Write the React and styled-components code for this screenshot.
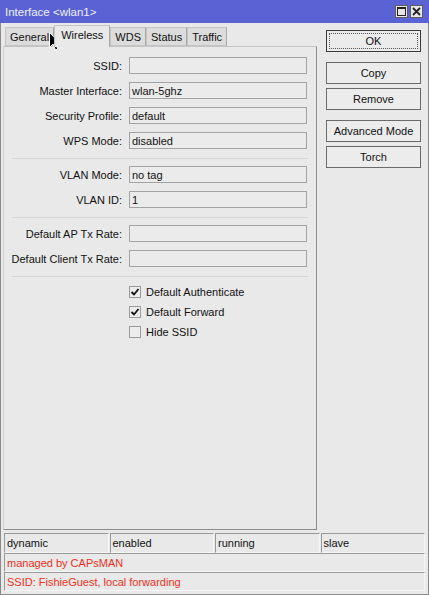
import React from "react";
import styled, { createGlobalStyle } from "styled-components";

const GlobalStyle = createGlobalStyle`
  html, body { margin: 0; padding: 0; background: #e9e9e9; }
  body {
    font-family: "Liberation Sans", Arial, sans-serif;
    font-size: 11px;
    color: #111;
  }
  * { box-sizing: border-box; }
`;

const Window = styled.div`
  position: relative;
  width: 429px;
  height: 595px;
  display: flex;
  flex-direction: column;
  background: #e9e9e9;
  border-left: 1px solid #8a8a8a;
  border-right: 1px solid #8a8a8a;
  border-bottom: 1px solid #8a8a8a;
`;

const TitleBar = styled.div`
  height: 23px;
  flex: none;
  margin: 0 -1px;
  background: #5a62d4;
  display: flex;
  align-items: center;
  justify-content: space-between;
  padding: 0 6px 0 5px;
  color: #eef0ff;
  font-size: 11.5px;
`;

const TitleButtons = styled.div`
  display: flex;
  gap: 2px;
`;

const TitleButton = styled.div`
  width: 13px;
  height: 13px;
  background: #e6e6e6;
  border: 1px solid #5d5d5d;
  display: flex;
  align-items: center;
  justify-content: center;
`;

const Main = styled.div`
  flex: 1;
  display: flex;
  min-height: 0;
`;

const LeftColumn = styled.div`
  width: 314px;
  margin-left: 2px;
  display: flex;
  flex-direction: column;
`;

const TabRow = styled.div`
  height: 23px;
  padding: 2px 0 0 2px;
  display: flex;
  align-items: flex-end;
`;

const Tab = styled.div`
  height: ${(p) => (p.$active ? "22px" : "19px")};
  padding: 0 ${(p) => (p.$active ? "6px" : "4px")};
  margin-bottom: ${(p) => (p.$active ? "-1px" : "0")};
  background: ${(p) => (p.$active ? "#e9e9e9" : "#dcdcdc")};
  border: 1px solid #c4c4c4;
  border-bottom: ${(p) => (p.$active ? "none" : "1px solid #c4c4c4")};
  border-right-color: #a8a8a8;
  display: flex;
  align-items: ${(p) => (p.$active ? "flex-start" : "center")};
  padding-top: ${(p) => (p.$active ? "3px" : "0")};
  font-size: 11px;
  color: #111;
  position: relative;
  z-index: ${(p) => (p.$active ? 1 : 0)};
`;

const Panel = styled.div`
  flex: 1;
  border-top: 1px solid #c4c4c4;
  border-left: 1px solid #d2d2d2;
  border-right: 1px solid #8c8c8c;
  border-bottom: 1px solid #8c8c8c;
  display: flex;
  flex-direction: column;
  padding: 0 8px;
`;

const Section = styled.div`
  display: flex;
  flex-direction: column;
  gap: ${(p) => p.$gap || 8}px;
  padding: ${(p) => p.$top || 8}px 0 9px;
  border-bottom: ${(p) => (p.$last ? "none" : "1px solid #d4d4d4")};
`;

const FieldRow = styled.div`
  display: flex;
  align-items: center;
  height: 17px;
`;

const Label = styled.div`
  width: 113px;
  margin-left: -3px;
  text-align: right;
  white-space: nowrap;
`;

const Input = styled.div`
  margin-left: 7px;
  width: 178px;
  height: 17px;
  border: 1px solid #a3a3a3;
  background: #ebebeb;
  display: flex;
  align-items: center;
  padding-left: 2px;
  font-size: 11px;
`;

const CheckRow = styled.div`
  display: flex;
  align-items: center;
  height: 14px;
  padding-left: 117px;
  gap: 5px;
`;

const CheckBox = styled.div`
  width: 12px;
  height: 12px;
  border: 1px solid #9a9a9a;
  background: #ececec;
  display: flex;
  align-items: center;
  justify-content: center;
`;

const RightColumn = styled.div`
  flex: 1;
  display: flex;
  flex-direction: column;
  padding: 7px 7px 0 9px;
`;

const Button = styled.div`
  height: 22px;
  border: 1px solid ${(p) => (p.$default ? "#3a3a3a" : "#6a6a6a")};
  background: #ececec;
  display: flex;
  align-items: center;
  justify-content: center;
  margin-top: ${(p) => p.$space || 0}px;
  position: relative;
  font-size: 11px;
  &::after {
    content: "";
    display: ${(p) => (p.$default ? "block" : "none")};
    position: absolute;
    inset: 2px;
    border: 1px dotted #555;
  }
`;

const StatusArea = styled.div`
  flex: none;
  padding: 3px;
  display: flex;
  flex-direction: column;
`;

const StatusCells = styled.div`
  display: grid;
  grid-template-columns: repeat(4, 1fr);
  gap: 1px;
`;

const StatusCell = styled.div`
  height: ${(p) => (p.$tall ? 20 : 19)}px;
  border-top: 1px solid #9a9a9a;
  border-left: 1px solid #9a9a9a;
  border-right: 1px solid #f6f6f6;
  border-bottom: 1px solid #f6f6f6;
  display: flex;
  align-items: center;
  padding-left: 2px;
  color: ${(p) => (p.$warn ? "#f0301a" : "#111")};
`;

const Cursor = styled.svg`
  position: absolute;
  left: 48px;
  top: 32px;
  pointer-events: none;
`;

const fields = [
  [
    ["SSID:", ""],
    ["Master Interface:", "wlan-5ghz"],
    ["Security Profile:", "default"],
    ["WPS Mode:", "disabled"],
  ],
  [
    ["VLAN Mode:", "no tag"],
    ["VLAN ID:", "1"],
  ],
  [
    ["Default AP Tx Rate:", ""],
    ["Default Client Tx Rate:", ""],
  ],
];

const checks = [
  ["Default Authenticate", true],
  ["Default Forward", true],
  ["Hide SSID", false],
];

const tabs = ["General", "Wireless", "WDS", "Status", "Traffic"];

const Tick = () => (
  <svg width="10" height="10" viewBox="0 0 10 10">
    <path d="M1.5 5 L4 7.5 L8.5 2" fill="none" stroke="#111" strokeWidth="1.8" />
  </svg>
);

export default function App() {
  return (
    <>
      <GlobalStyle />
      <Window>
        <TitleBar>
          <span>Interface &lt;wlan1&gt;</span>
          <TitleButtons>
            <TitleButton>
              <svg width="9" height="9" viewBox="0 0 9 9">
                <rect x="0.5" y="0.5" width="8" height="8" fill="none" stroke="#222" />
                <rect x="0.5" y="0.5" width="8" height="1.5" fill="#222" />
              </svg>
            </TitleButton>
            <TitleButton>
              <svg width="9" height="9" viewBox="0 0 9 9">
                <path d="M1 1 L8 8 M8 1 L1 8" stroke="#222" strokeWidth="1.8" />
              </svg>
            </TitleButton>
          </TitleButtons>
        </TitleBar>
        <Main>
          <LeftColumn>
            <TabRow>
              {tabs.map((t) => (
                <Tab key={t} $active={t === "Wireless"}>
                  {t}
                </Tab>
              ))}
            </TabRow>
            <Panel>
              {fields.map((group, gi) => (
                <Section key={gi} $top={gi === 0 ? 10 : 7}>
                  {group.map(([label, value]) => (
                    <FieldRow key={label}>
                      <Label>{label}</Label>
                      <Input>{value}</Input>
                    </FieldRow>
                  ))}
                </Section>
              ))}
              <Section $last $top={8} $gap={6}>
                {checks.map(([label, on]) => (
                  <CheckRow key={label}>
                    <CheckBox>{on && <Tick />}</CheckBox>
                    <span>{label}</span>
                  </CheckRow>
                ))}
              </Section>
            </Panel>
          </LeftColumn>
          <RightColumn>
            <Button $default>OK</Button>
            <Button $space={10}>Copy</Button>
            <Button $space={4}>Remove</Button>
            <Button $space={10}>Advanced Mode</Button>
            <Button $space={4}>Torch</Button>
          </RightColumn>
        </Main>
        <StatusArea>
          <StatusCells>
            <StatusCell $tall>dynamic</StatusCell>
            <StatusCell $tall>enabled</StatusCell>
            <StatusCell $tall>running</StatusCell>
            <StatusCell $tall>slave</StatusCell>
          </StatusCells>
          <StatusCell $warn>managed by CAPsMAN</StatusCell>
          <StatusCell $warn>SSID: FishieGuest, local forwarding</StatusCell>
        </StatusArea>
        <Cursor width="12" height="19" viewBox="0 0 12 19">
          <path
            d="M0.5 0.5 L0.5 15.5 L4 12 L6.5 18 L8.8 17 L6.3 11.2 L11 11.2 Z"
            fill="#000"
            stroke="#fff"
            strokeWidth="1"
          />
        </Cursor>
      </Window>
    </>
  );
}
